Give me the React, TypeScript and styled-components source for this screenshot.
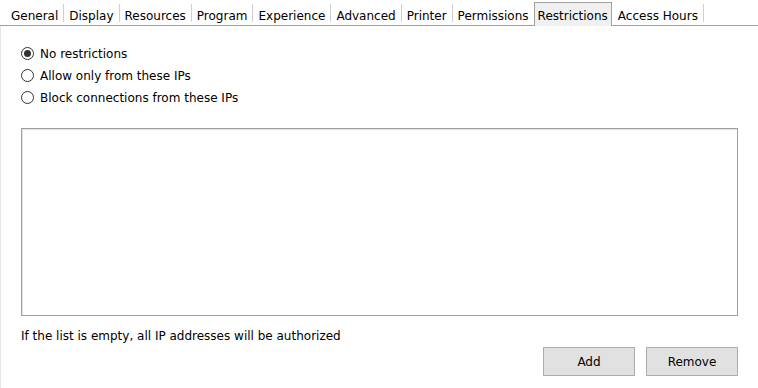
import React, { useState } from "react";
import styled, { createGlobalStyle } from "styled-components";

const FONT = `"DejaVu Sans", Tahoma, Verdana, sans-serif`;

const Global = createGlobalStyle`
  html, body { margin: 0; padding: 0; background: #ffffff; }
  body { font-family: ${FONT}; font-size: 12px; color: #000; }
`;

const Page = styled.div`
  width: 758px;
  height: 388px;
  box-sizing: border-box;
  background: #fff;
  display: flex;
  flex-direction: column;
`;

const TabBar = styled.div`
  display: flex;
  align-items: flex-end;
  height: 26px;
  padding-left: 6px;
  border-bottom: 1px solid #a0a0a0;
  box-sizing: border-box;
`;

const Tab = styled.div<{ $active?: boolean }>`
  height: ${(p) => (p.$active ? "24px" : "22px")};
  padding: ${(p) => (p.$active ? "3px 3px 0" : "3px 5px 0")};
  display: flex;
  align-items: center;
  box-sizing: border-box;
  color: #000;
  white-space: nowrap;
  background: ${(p) => (p.$active ? "#f0f0f0" : "transparent")};
  border: ${(p) => (p.$active ? "1px solid #a0a0a0" : "none")};
  border-bottom: none;
  margin-bottom: ${(p) => (p.$active ? "-1px" : "0")};
  margin-left: ${(p) => (p.$active ? "0" : "0")};
  margin-right: ${(p) => (p.$active ? "1px" : "0")};
`;

const Sep = styled.div`
  width: 1px;
  height: 18px;
  background: #cfcfcf;
  margin-bottom: 3px;
`;

const Body = styled.div`
  flex: 1;
  display: flex;
  flex-direction: column;
  padding: 21px 20px 0 20px;
  border-left: 1px solid #e6e6e6;
`;

const RadioGroup = styled.div`
  display: flex;
  flex-direction: column;
  gap: 9px;
`;

const RadioRow = styled.label`
  display: flex;
  align-items: center;
  gap: 6px;
  height: 13px;
  cursor: default;
`;

const RadioCircle = styled.span<{ $on?: boolean }>`
  width: 13px;
  height: 13px;
  box-sizing: border-box;
  border-radius: 50%;
  border: 1px solid #333;
  background: #fff;
  display: flex;
  align-items: center;
  justify-content: center;
  flex-shrink: 0;
  &::after {
    content: "";
    width: 7px;
    height: 7px;
    border-radius: 50%;
    background: ${(p) => (p.$on ? "#333" : "transparent")};
  }
`;

const ListBox = styled.div`
  margin-top: 24px;
  height: 188px;
  box-sizing: border-box;
  border: 1px solid #a0a0a0;
  box-shadow: inset 1px 1px 0 #e3e3e3;
  background: #fff;
`;

const Hint = styled.div`
  margin-top: 13px;
  line-height: 14px;
`;

const Buttons = styled.div`
  display: flex;
  justify-content: flex-end;
  gap: 11px;
  margin-top: 4px;
`;

const Button = styled.button`
  width: 92px;
  height: 29px;
  box-sizing: border-box;
  border: 1px solid #adadad;
  background: #e1e1e1;
  font-family: ${FONT};
  font-size: 12px;
  color: #000;
  padding: 0;
`;

const tabs = ["General", "Display", "Resources", "Program", "Experience", "Advanced", "Printer", "Permissions", "Restrictions", "Access Hours"];
const options = ["No restrictions", "Allow only from these IPs", "Block connections from these IPs"];

export default function App() {
  const [sel, setSel] = useState(0);
  const active = 8;
  return (
    <Page>
      <Global />
      <TabBar>
        {tabs.map((t, i) => (
          <React.Fragment key={t}>
            <Tab $active={i === active}>{t}</Tab>
            {i !== active && i + 1 !== active && <Sep />}
          </React.Fragment>
        ))}
      </TabBar>
      <Body>
        <RadioGroup>
          {options.map((o, i) => (
            <RadioRow key={o} onClick={() => setSel(i)}>
              <RadioCircle $on={sel === i} />
              {o}
            </RadioRow>
          ))}
        </RadioGroup>
        <ListBox />
        <Hint>If the list is empty, all IP addresses will be authorized</Hint>
        <Buttons>
          <Button>Add</Button>
          <Button>Remove</Button>
        </Buttons>
      </Body>
    </Page>
  );
}
